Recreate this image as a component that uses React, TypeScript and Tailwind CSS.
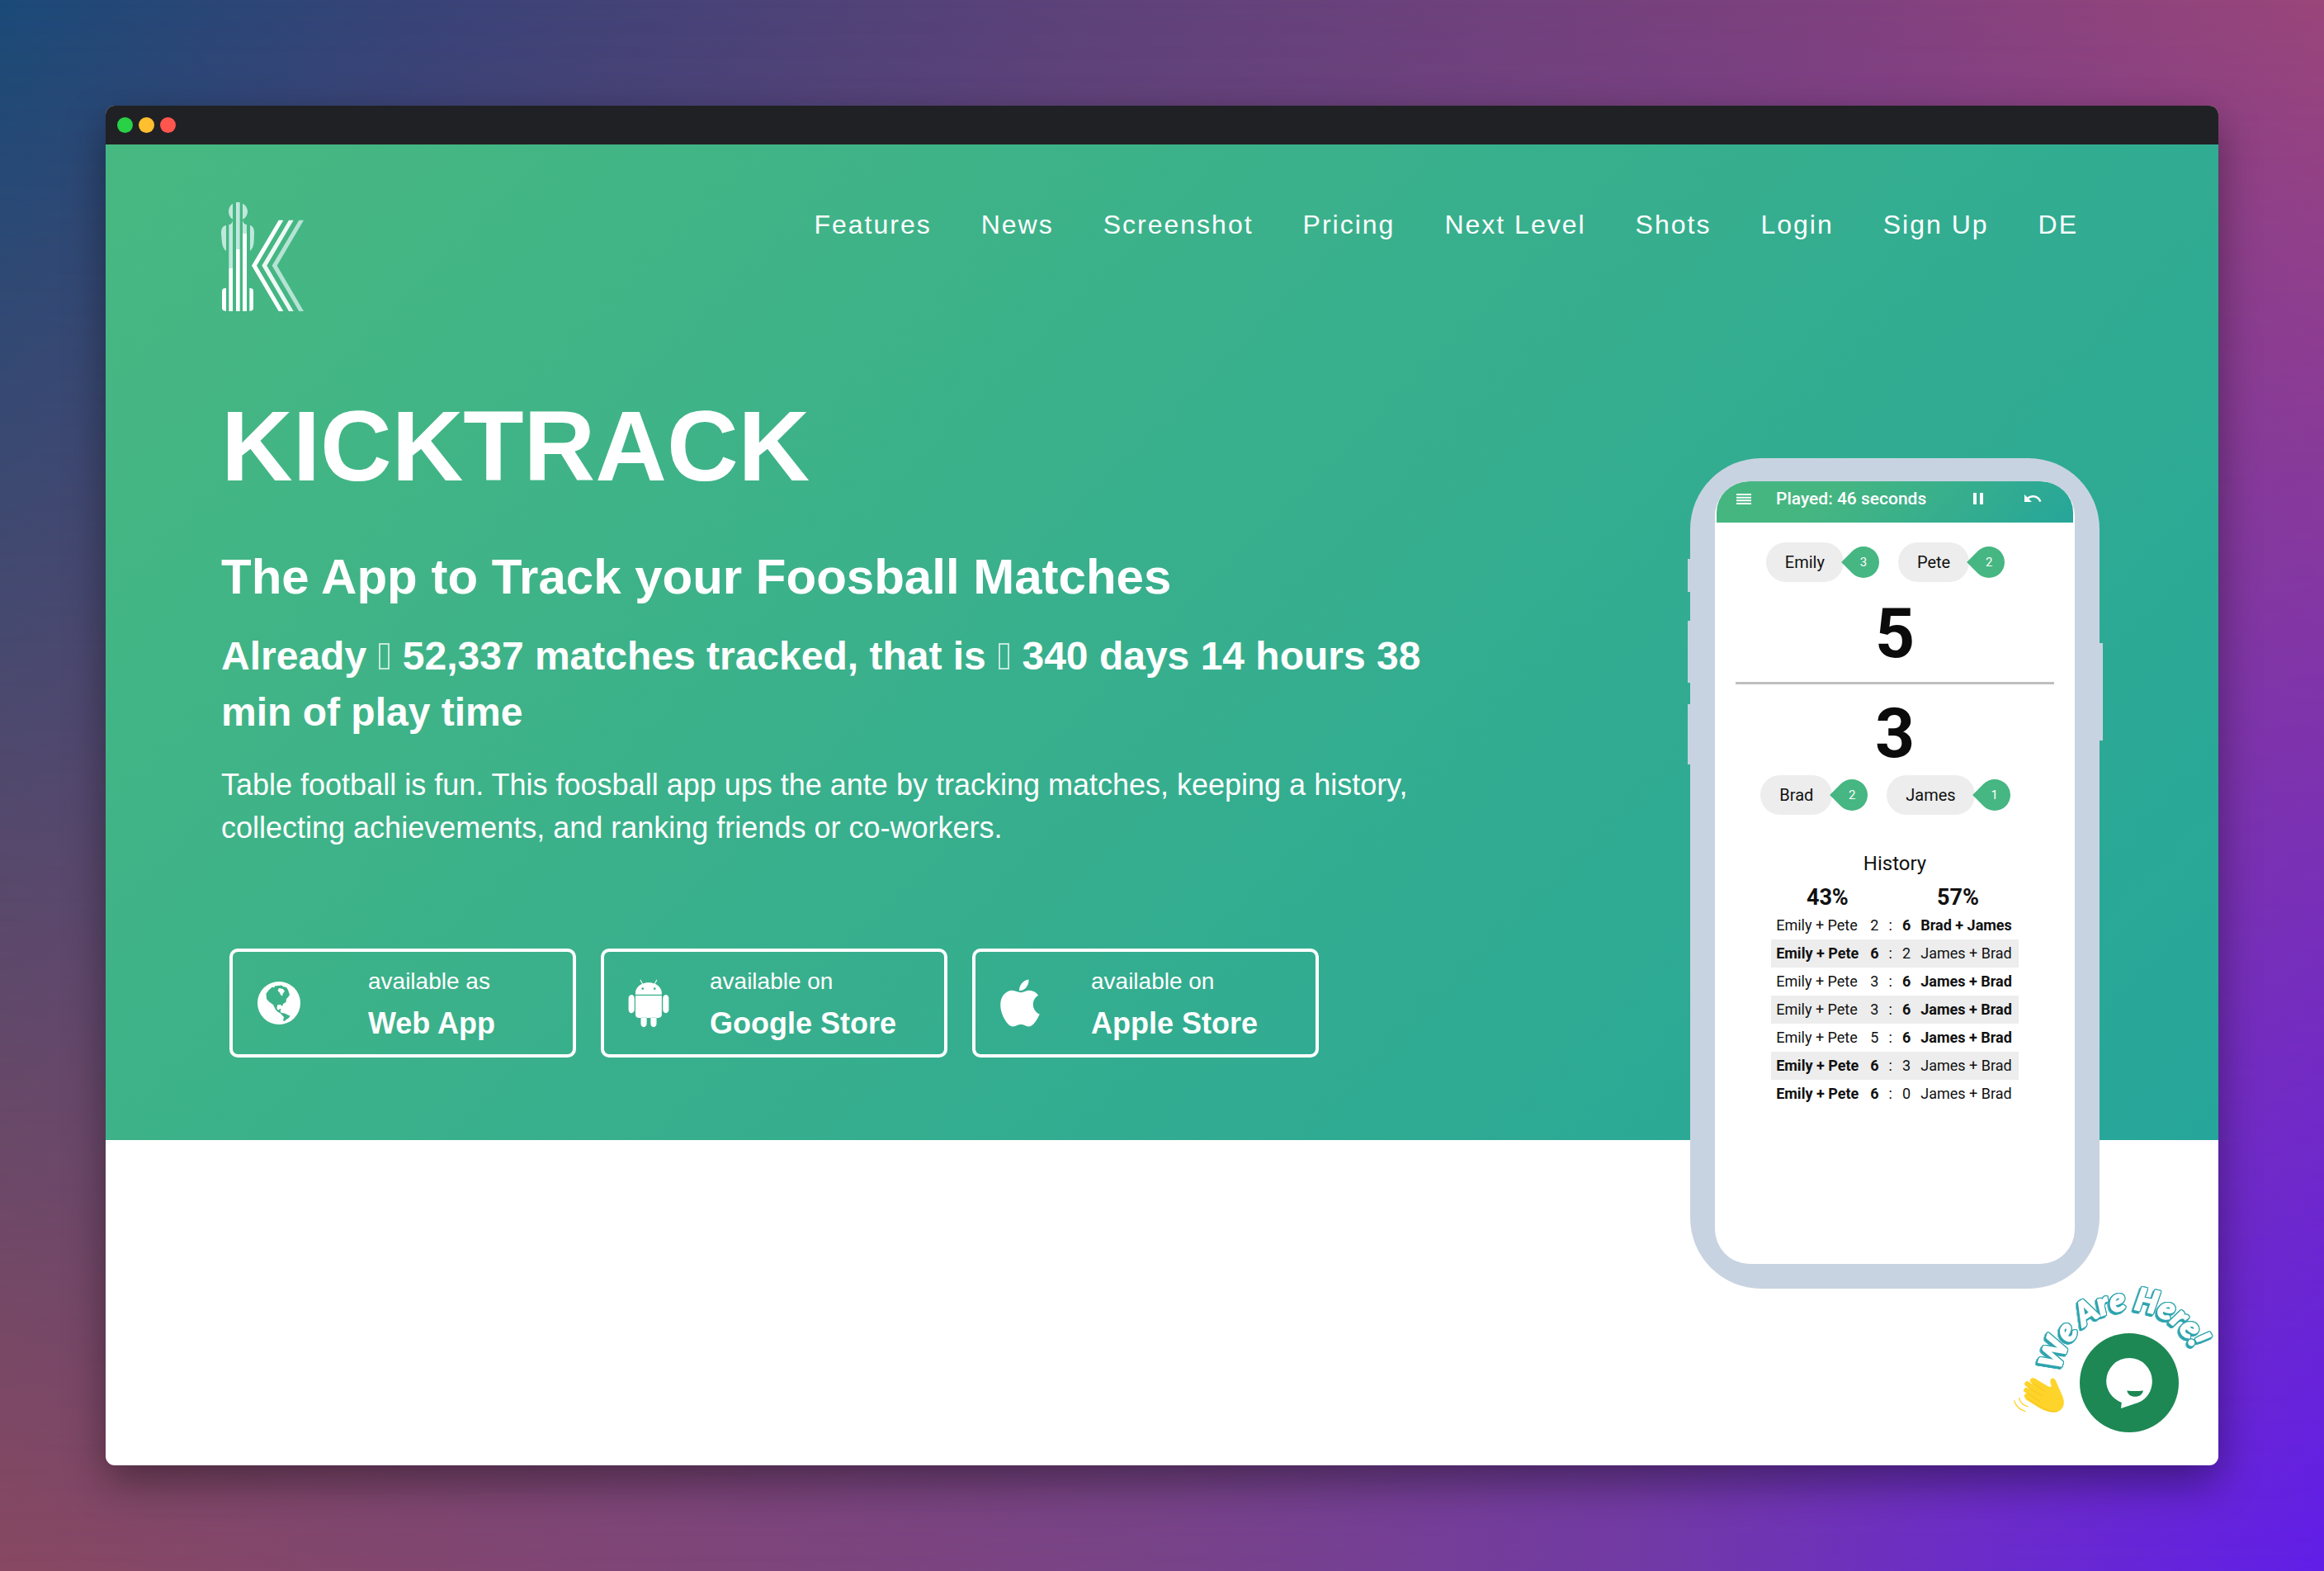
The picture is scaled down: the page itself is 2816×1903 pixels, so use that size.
import React from "react";
import { DiAndroid } from "react-icons/di";
import { IoLogoApple } from "react-icons/io";
import { MdPause, MdUndo } from "react-icons/md";

const navItems = ["Features", "News", "Screenshot", "Pricing", "Next Level", "Shots", "Login", "Sign Up", "DE"];

function Globe({ className }: { className?: string }) {
  return (
    <svg viewBox="-10 -10 72 72" className={className} aria-hidden="true">
      <path
        fill="currentColor"
        fillRule="evenodd"
        d="M26 0a26 26 0 1 1 0 52 26 26 0 0 1 0-52ZM10.5 14.5L14 10L18 6.5L20 7.5L21 5.5L25 5L29 4.5L31 6L35 7L37 10L38 13L39 16L37 19L35 21L34.5 25L31 27L30 30L28 28L24.5 28L23.5 31L24 34L26 34.5L27 33L28.5 33L27.5 36L29 38L33 38.5L37 40.5L39.5 41.5L38 44L35 46L32.5 48L31 47.5L32 43L29 40L28 38.5L25 37L22 34L19 28L14 24.5L11 21ZM26 8L24.5 11L27 13.5L28 16L30 17.5L31 14L33 12L31 9Z"
      />
    </svg>
  );
}

const stores = [
  { name: "Web App", note: "available as", icon: <Globe className="size-[72px] shrink-0" /> },
  { name: "Google Store", note: "available on", icon: <DiAndroid className="mr-2 ml-1 size-[60px] shrink-0" /> },
  { name: "Apple Store", note: "available on", icon: <IoLogoApple className="-ml-1 size-[76px] shrink-0" /> },
];

const history = [
  { home: "Emily + Pete", a: 2, b: 6, away: "Brad + James" },
  { home: "Emily + Pete", a: 6, b: 2, away: "James + Brad" },
  { home: "Emily + Pete", a: 3, b: 6, away: "James + Brad" },
  { home: "Emily + Pete", a: 3, b: 6, away: "James + Brad" },
  { home: "Emily + Pete", a: 5, b: 6, away: "James + Brad" },
  { home: "Emily + Pete", a: 6, b: 3, away: "James + Brad" },
  { home: "Emily + Pete", a: 6, b: 0, away: "James + Brad" },
];

function Logo() {
  return (
    <svg viewBox="444 375 300 396" className="h-[132px] w-[100px]" aria-hidden="true">
      <g fill="#c0e8dd">
        <path d="M462 459v93c-12-10-15-25-16-40l-2-25c0-18 6-26 18-28Z" />
        <path d="M486 380v57c-8-4-15-15-15-28s7-25 15-29Z" />
        <path d="M486 441v174h-14V456c8 0 12-6 14-15Z" />
        <path d="M498 375h14v171h-14Z" />
        <path d="M522 380v57c10-4 18-15 18-28s-8-25-18-29Z" />
        <path d="M522 441c3 9 7 15 15 15v33h-15Z" />
        <path d="M549 459v93c11-10 14-25 14-40l1-25c0-18-5-26-15-28Z" />
      </g>
      <g fill="#fff">
        <path d="M462 687v83c-9 0-15-3-15-12v-60c0-8 5-11 15-11Z" />
        <path d="M472 615h14v156h-14Z" />
        <path d="M498 546h14v225h-14Z" />
        <path d="M522 489h15v282h-15Z" />
        <path d="M547 687v83c9 0 14-3 14-12v-60c0-8-5-11-14-11Z" />
        <path d="M653 440h17l-97 165 97 166h-17l-98-166Z" />
      </g>
      <path fill="#eef8f4" d="M690 440h17l-97 165 97 166h-17l-98-166Z" />
      <path fill="#b5e3d4" d="M727 440h17l-97 165 97 166h-17l-98-166Z" />
    </svg>
  );
}

function Missing() {
  return <span className="mx-0.5 inline-block h-8 w-[13px] border-2 border-white/70" aria-hidden="true" />;
}

function Player({ name, goals }: { name: string; goals: number }) {
  return (
    <div className="mr-[23px] flex items-center gap-[5px]">
      <span className="flex h-12 items-center rounded-full bg-[#ededed] px-[23px] text-xl text-[#111]">{name}</span>
      <span className="relative flex size-[38px] items-center justify-center text-[15px] text-white before:absolute before:inset-0 before:rotate-45 before:rounded-full before:rounded-bl-[4px] before:bg-[#46b682]">
        <span className="relative">{goals}</span>
      </span>
    </div>
  );
}

function Phone() {
  return (
    <div className="relative mt-[178px] mr-1 -mb-[280px] h-[1006px] w-[496px] shrink-0 rounded-[86px] bg-[#c8d3e1] px-[30px] pt-7 pb-[30px] font-['Roboto',sans-serif]">
      <span className="absolute top-[122px] -left-[3px] h-10 w-1 bg-[#c8d3e1]" />
      <span className="absolute top-[197px] -left-[3px] h-[75px] w-1 bg-[#c8d3e1]" />
      <span className="absolute top-[298px] -left-[3px] h-[73px] w-1 bg-[#c8d3e1]" />
      <span className="absolute top-[224px] -right-1 h-[118px] w-1 bg-[#c8d3e1]" />
      <div className="flex h-full flex-col items-center overflow-hidden rounded-[42px] bg-white px-0.5">
        <div className="flex h-[50px] w-full items-center rounded-t-[38px] bg-[linear-gradient(135deg,#46b681_30%,#26a69a)] pr-[37px] pb-2 pl-6 text-white">
          <button type="button" aria-label="Menu">
            <svg viewBox="0 0 18 13" className="h-[13px] w-[18px]" fill="currentColor">
              <path d="M0 0h18v2H0ZM0 3.7h18v2H0ZM0 7.3h18v2H0ZM0 11h18v2H0Z" />
            </svg>
          </button>
          <span className="ml-[30px] text-[21px] leading-6 font-medium">Played: 46 seconds</span>
          <button type="button" aria-label="Pause" className="ml-auto">
            <MdPause className="size-6" />
          </button>
          <button type="button" aria-label="Undo" className="ml-[42px]">
            <MdUndo className="size-6" />
          </button>
        </div>
        <div className="mt-6 flex">
          <Player name="Emily" goals={3} />
          <Player name="Pete" goals={2} />
        </div>
        <div className="mt-[21px] text-[84px] leading-[84px] font-bold text-[#0b0b0b]">5</div>
        <hr className="mt-4 h-[3px] w-[386px] border-0 bg-[#bfbfbf]" />
        <div className="mt-[18px] text-[84px] leading-[84px] font-bold text-[#0b0b0b]">3</div>
        <div className="mt-2 flex">
          <Player name="Brad" goals={2} />
          <Player name="James" goals={1} />
        </div>
        <div className="mt-[43px] text-2xl leading-8 text-[#111]">History</div>
        <table className="mt-2 border-collapse text-lg leading-[34px] text-[#111]">
          <thead>
            <tr className="text-[27px] font-bold">
              <th colSpan={2} className="p-0">43%</th>
              <th className="p-0" />
              <th colSpan={2} className="p-0">57%</th>
            </tr>
          </thead>
          <tbody>
            {history.map((m, i) => (
              <tr key={i} className="even:bg-[#ededed]">
                <td className={m.a > m.b ? "pr-2 pl-1.5 font-bold" : "pr-2 pl-1.5"}>{m.home}</td>
                <td className={m.a > m.b ? "px-1.5 font-bold" : "px-1.5"}>{m.a}</td>
                <td className="px-1.5">:</td>
                <td className={m.b > m.a ? "px-1.5 font-bold" : "px-1.5"}>{m.b}</td>
                <td className={m.b > m.a ? "pr-2 pl-1.5 font-bold" : "pr-2 pl-1.5"}>{m.away}</td>
              </tr>
            ))}
          </tbody>
        </table>
      </div>
    </div>
  );
}

function ChatWidget() {
  return (
    <div className="absolute right-0 bottom-0 h-[245px] w-[268px]">
      <svg viewBox="0 0 804 735" className="absolute inset-0 size-full overflow-visible">
        <path id="greeting-arc" d="M232 394A252 252 0 1 1 700 550" fill="none" />
        <text
          className="[filter:drop-shadow(3px_0_0_#2fa4ae)_drop-shadow(-3px_0_0_#2fa4ae)_drop-shadow(0_3px_0_#2fa4ae)_drop-shadow(0_-3px_0_#2fa4ae)_drop-shadow(-5px_6px_0_#2fa4ae)]"
          fontFamily="Lato, sans-serif"
          fontWeight="900"
          fontStyle="italic"
          fontSize="115"
          fill="#fff"
          stroke="#fff"
          strokeWidth="5"
          strokeLinejoin="round"
        >
          <textPath href="#greeting-arc">We Are Here!</textPath>
        </text>
        <g stroke="#fed42a" strokeLinecap="round" fill="none">
          <path strokeWidth="19" d="M129 427 180 462M109 439 170 480M106 462 165 495M108 483 160 515" />
          <path strokeWidth="4" d="M80 490c3 15 14 27 31 31M62 501c6 18 20 32 40 38" />
        </g>
        <path
          fill="#fed42a"
          d="M135 418 182 446q13 8 15 0-8-20 0-26c8-4 13 0 17 10l24 55c10 25 3 45-16 54-20 8-45 0-67-12l-52-32Z"
        />
        <path stroke="#f5b819" strokeWidth="2" fill="none" d="M130 437 173 466M112 451 165 484M108 472 155 503M110 492c40 28 75 50 107 48" />
      </svg>
      <button
        type="button"
        aria-label="Open chat"
        className="absolute right-12 bottom-10 flex size-[120px] items-center justify-center rounded-full bg-[#1d8854]"
      >
        <svg viewBox="396 345 168 184" className="h-[61px] w-14">
          <path fill="#fff" d="M480 345a84 84 0 0 1 84 84c0 38-20 67-51 79l-63 21 2-21c-34-14-56-44-56-79a84 84 0 0 1 84-84Z" />
          <path fill="#1d8854" d="M472 464q30 4 59 0c-2 14-14 22-29 22-16 0-28-8-30-22Z" />
        </svg>
      </button>
    </div>
  );
}

export default function App() {
  return (
    <div className="relative flex min-h-screen bg-[linear-gradient(to_right,#1b4a78,#384377_18%,#5d4279_46%,#80417f_80%,#9a467a)] p-[128px] font-['Liberation_Sans',Arial,sans-serif]">
      <div className="absolute inset-0 bg-[linear-gradient(to_right,#884862,#784388_50%,#723aa4_70%,#6a2bcc_86%,#601ee8)] [mask-image:linear-gradient(to_bottom,transparent,black)]" />
      <div className="relative flex flex-1 flex-col overflow-hidden rounded-[11px] bg-white shadow-[0_20px_50px_rgba(0,0,0,0.4)]">
        <div className="flex h-[47px] shrink-0 items-center gap-[7px] bg-[#202124] px-3.5">
          <span className="size-[19px] rounded-full bg-[#28d146]" />
          <span className="size-[19px] rounded-full bg-[#ffbf2f]" />
          <span className="size-[19px] rounded-full bg-[#ff554f]" />
        </div>
        <main className="bg-[linear-gradient(135deg,#48b881,#26a69a)] px-[140px] pt-[70px] pb-[100px] text-white">
          <header className="flex items-start justify-between">
            <a href="#top" aria-label="Kicktrack">
              <Logo />
            </a>
            <nav className="mt-[3px] mr-[30px] flex gap-[60px] text-[32px] leading-[48px] tracking-[2px]">
              {navItems.map((item) => (
                <a key={item} href="#top">
                  {item}
                </a>
              ))}
            </nav>
          </header>
          <div className="flex items-start justify-between">
            <section className="max-w-[1500px] pt-[91px]">
              <h1 className="text-[120px] leading-[144px] font-bold">KICKTRACK</h1>
              <h2 className="mt-[45px] text-6xl leading-[84px] font-bold">The App to Track your Foosball Matches</h2>
              <h3 className="mt-5 text-5xl leading-[68px] font-bold">
                Already <Missing /> 52,337 matches tracked, that is <Missing /> 340 days 14 hours 38 min of play time
              </h3>
              <p className="mt-7 text-4xl leading-[52px]">
                Table football is fun. This foosball app ups the ante by tracking matches, keeping a history, collecting
                achievements, and ranking friends or co-workers.
              </p>
              <div className="mt-[120px] ml-2.5 flex gap-[30px]">
                {stores.map(({ name, note, icon }) => (
                  <a key={name} href="#top" className="flex h-[132px] w-[420px] items-center rounded-[10px] border-4 border-white pr-[22px] pl-5">
                    {icon}
                    <span className="flex flex-1 justify-center pt-1">
                      <span className="flex flex-col gap-[3px]">
                        <span className="text-[28px] leading-[42px]">{note}</span>
                        <strong className="text-4xl leading-[54px]">{name}</strong>
                      </span>
                    </span>
                  </a>
                ))}
              </div>
            </section>
            <Phone />
          </div>
        </main>
        <ChatWidget />
      </div>
    </div>
  );
}
